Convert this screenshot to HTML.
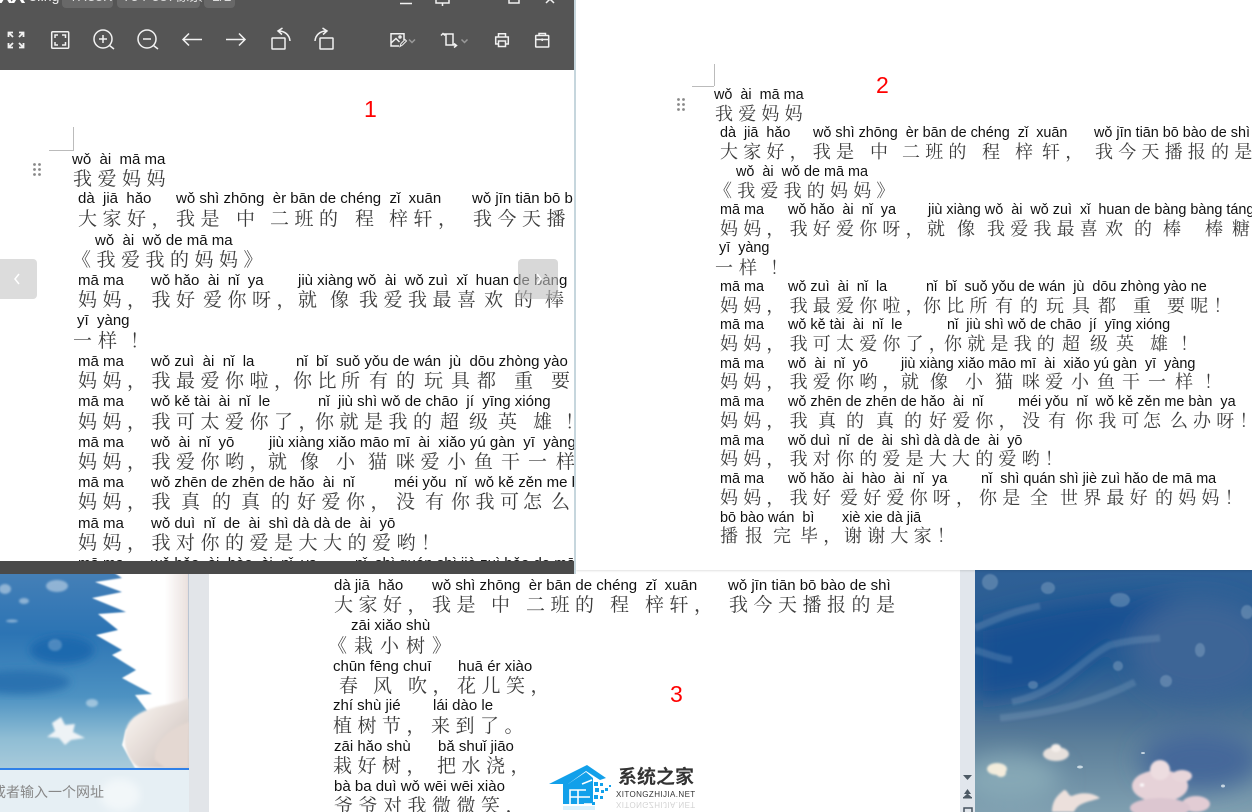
<!DOCTYPE html>
<html lang="zh">
<head>
<meta charset="utf-8">
<title>Screenshot</title>
<style>
html,body{margin:0;padding:0;background:#fff}
#root{position:relative;width:1252px;height:812px;overflow:hidden;background:#fff;font-family:"Liberation Sans","Noto Sans CJK SC",sans-serif}
.a{position:absolute}
i,b{position:absolute;font-style:normal;font-weight:normal;white-space:pre;line-height:20px}
i{font-family:"Liberation Sans",sans-serif;color:#111;margin-top:1px}
b{font-family:"Noto Serif CJK SC","Liberation Serif",serif;color:#3c3c3c}
.p1 i,.p3 i{font-size:15px}
.p1 b,.p3 b{font-size:19px;letter-spacing:5.5px}
.p2 i{font-size:14.4px}
.p2 b{font-size:18px;letter-spacing:5.2px}
.n{position:absolute;color:#f00;font-size:23px;line-height:26px;font-family:"Liberation Sans",sans-serif}
</style>
</head>
<body>
<div id="root">

<!-- panel 3 backgrounds -->
<svg class="a" style="left:0;top:560px" width="1252" height="252" viewBox="0 560 1252 252">
<defs>
<linearGradient id="lg" x1="0" y1="0" x2="0" y2="1"><stop offset="0" stop-color="#4a82b8"/><stop offset=".35" stop-color="#2c74b4"/><stop offset=".65" stop-color="#4d92c2"/><stop offset=".85" stop-color="#8fbdd4"/><stop offset="1" stop-color="#a9cbdb"/></linearGradient>
<linearGradient id="rg" x1="0" y1="0" x2="0" y2="1"><stop offset="0" stop-color="#2f6096"/><stop offset=".4" stop-color="#275c93"/><stop offset=".62" stop-color="#4a7095"/><stop offset=".72" stop-color="#5c7f9a"/><stop offset="1" stop-color="#7f9fb0"/></linearGradient>
<linearGradient id="fur" x1="0" y1="0" x2="1" y2="0"><stop offset="0" stop-color="#fff"/><stop offset=".75" stop-color="#fff"/><stop offset="1" stop-color="#e9dfdc"/></linearGradient>
<linearGradient id="paw" x1="0" y1="0" x2="1" y2="1"><stop offset="0" stop-color="#fffaf6"/><stop offset="1" stop-color="#c9bdb8"/></linearGradient>
<filter id="b05"><feGaussianBlur stdDeviation=".8"/></filter>
<filter id="b1"><feGaussianBlur stdDeviation="1"/></filter>
<filter id="b3"><feGaussianBlur stdDeviation="4"/></filter>
<filter id="b8"><feGaussianBlur stdDeviation="12"/></filter>
<clipPath id="cl"><rect x="0" y="560" width="189" height="208"/></clipPath>
<clipPath id="cr"><rect x="975" y="570" width="277" height="242"/></clipPath>
</defs>
<g clip-path="url(#cl)">
<rect x="0" y="560" width="189" height="210" fill="url(#lg)"/>
<g filter="url(#b3)">
<ellipse cx="62" cy="650" rx="32" ry="14" fill="#1f69ae"/>
<ellipse cx="20" cy="682" rx="50" ry="12" fill="#2a72b0"/>
</g>
<g fill="#fff" opacity=".42" filter="url(#b1)">
<ellipse cx="57" cy="586" rx="11" ry="6"/><ellipse cx="5" cy="589" rx="6" ry="5"/><ellipse cx="24" cy="601" rx="5" ry="3"/><ellipse cx="55" cy="645" rx="7" ry="6" opacity=".5"/><ellipse cx="92" cy="703" rx="6" ry="4"/><ellipse cx="12" cy="621" rx="6" ry="1.500"/>
</g>
<path d="M61 717l4 8 10-1-2 8 12 6-14 2-6 5-6-7-12-1 8-6-3-8z" fill="#eef3f6" filter="url(#b1)"/>
<path d="M189 574V768H135L122 745 126 730 148 712 135 695 152 694 122 678 136 670 112 655 122 650 96 635 118 630 98 614 126 612 92 598 122 592 95 582 122 578 110 570H189Z" fill="url(#fur)" filter="url(#b05)"/>
<path d="M125 745C122 722 135 712 160 706 172 704 185 700 189 698V768H140C132 764 127 755 125 745Z" fill="url(#paw)" filter="url(#b1)"/>
<path d="M155 760C153 745 165 730 189 722V768H165Z" fill="#e4d8d2" filter="url(#b1)"/>
</g>
<rect x="0" y="768" width="189" height="2" fill="#2f80e8"/>
<rect x="0" y="770" width="189" height="42" fill="#e6eff4"/>
<ellipse cx="120" cy="795" rx="20" ry="16" fill="#f2f7f9" filter="url(#b3)"/>
<rect x="189" y="560" width="20" height="252" fill="#e2e5e9"/>
<rect x="209" y="560" width="751" height="252" fill="#fff"/>
<rect x="960" y="560" width="16" height="252" fill="#e1e6ec"/>
<g clip-path="url(#cr)">
<rect x="975" y="565" width="277" height="247" fill="url(#rg)"/>
<g filter="url(#b8)">
<path d="M975 625C1040 610 1070 600 1180 595L1100 650 1050 690 975 702Z" fill="#125092"/>
<ellipse cx="1200" cy="650" rx="70" ry="50" fill="#3c6596"/>
<ellipse cx="1200" cy="760" rx="60" ry="30" fill="#44689a"/>
<ellipse cx="1010" cy="780" rx="50" ry="25" fill="#86a8b6"/>
</g>
<g fill="none" stroke="#9dbad0" stroke-width="7" opacity=".22" filter="url(#b1)">
<path d="M975 628C1000 618 1010 612 1040 606"/>
<path d="M1012 702C1060 692 1080 660 1110 645 1130 640 1140 640 1160 638"/>
<path d="M1000 718C1060 712 1100 700 1135 682"/>
<path d="M975 650C990 655 1005 660 1012 660"/>
</g>
<g fill="#8fadc9" opacity=".42" filter="url(#b05)">
<ellipse cx="990" cy="582" rx="8" ry="8"/><ellipse cx="1048" cy="588" rx="7" ry="6"/><ellipse cx="1120" cy="600" rx="10" ry="7"/><ellipse cx="1247" cy="612" rx="6" ry="7"/><ellipse cx="1118" cy="666" rx="5" ry="5"/><ellipse cx="1200" cy="650" rx="5" ry="7"/><ellipse cx="1166" cy="681" rx="6" ry="6"/><ellipse cx="1033" cy="685" rx="5" ry="4"/>
</g>
<g filter="url(#b1)">
<ellipse cx="1056" cy="754" rx="13" ry="7" fill="#e6e0dc"/><ellipse cx="1056" cy="748" rx="5" ry="4" fill="#f4eeea"/>
<ellipse cx="997" cy="769" rx="10" ry="6" fill="#f2ecdc"/><ellipse cx="1001" cy="773" rx="5" ry="4" fill="#f4ecdc"/>
<ellipse cx="1160" cy="786" rx="28" ry="16" fill="#e6d2d8"/><ellipse cx="1160" cy="770" rx="10" ry="10" fill="#eddde0"/><ellipse cx="1182" cy="776" rx="10" ry="6" fill="#e8d6da"/><ellipse cx="1196" cy="804" rx="14" ry="8" fill="#e2ccd4"/><ellipse cx="1160" cy="808" rx="30" ry="10" fill="#dcc6d0"/>
<path d="M1052 812C1052 800 1058 795 1064 790 1068 790 1068 796 1072 796 1080 792 1092 792 1100 798 1090 802 1078 802 1074 812Z" fill="#ece0dc"/>
<ellipse cx="1142" cy="785" rx="2" ry="1.500" fill="#fff"/>
</g>
<g fill="#e2ecf2" opacity=".8"><ellipse cx="1080" cy="767" rx="3" ry="1.500"/><ellipse cx="1223" cy="786" rx="2" ry="1.500"/><ellipse cx="1143" cy="753" rx="2" ry="1"/></g>
</g>
<g fill="#3e4b57" opacity=".9">
<path d="M963 775h9l-4.500 5z"/><rect x="963" y="797" width="9" height="1.500"/><path d="M964 794l3.500-5 3.500 5z"/><path d="M963 797.500l4.500-4 4.500 4z"/>
</g>
<rect x="964" y="808" width="8" height="8" fill="none" stroke="#46525e" stroke-width="1.500"/>
</svg>
<div class="a" style="left:-8px;top:782px;font-size:14px;line-height:20px;color:#888;white-space:nowrap">或者输入一个网址</div>

<!-- panel 3 -->
<div class="a p3" style="left:0;top:0;width:1252px;height:812px">
<i style="left:334px;top:575px">dà jiā  hǎo</i><i style="left:432px;top:575px">wǒ shì zhōng  èr bān de chéng  zǐ  xuān</i><i style="left:728px;top:575px">wǒ jīn tiān bō bào de shì</i>
<b style="left:334px;top:594px">大家好，我是</b><b style="left:491px;top:594px">中</b><b style="left:526px;top:594px">二班的</b><b style="left:610px;top:594px">程</b><b style="left:645px;top:594px">梓轩，</b><b style="left:729px;top:594px">我今天播报的是</b>
<i style="left:351px;top:615px">zāi xiǎo shù</i>
<b style="left:328px;top:635px;letter-spacing:7px">《栽小树》</b>
<i style="left:333px;top:656px">chūn fēng chuī</i><i style="left:458px;top:656px">huā ér xiào</i>
<b style="left:339px;top:675px">春</b><b style="left:373px;top:675px">风</b><b style="left:408px;top:675px">吹，花儿笑，</b>
<i style="left:333px;top:695px">zhí shù jié</i><i style="left:433px;top:695px">lái dào le</i>
<b style="left:333px;top:715px">植树节，来到了。</b>
<i style="left:334px;top:736px">zāi hǎo shù</i><i style="left:438px;top:736px">bǎ shuǐ jiāo</i>
<b style="left:333px;top:755px">栽好树，</b><b style="left:437px;top:755px">把水浇，</b>
<i style="left:334px;top:776px">bà ba duì wǒ wēi wēi xiào</i>
<b style="left:334px;top:795px">爷爷对我微微笑，</b>
</div>
<div class="n" style="left:670px;top:681px">3</div>

<!-- watermark -->
<svg class="a" style="left:545px;top:760px" width="70" height="52" viewBox="545 760 70 52">
<path d="M549 784L587 765 606 778 600 780 586 771 568 784Z" fill="#12a0ea"/>
<path d="M563 784H568L586 772 593 778V804H563Z" fill="#12a0ea"/>
<g stroke="#fff" stroke-width="1.600" fill="none"><path d="M570 805V790H586M570 797H590M578 790V805M582 784L592 780M584 804H594"/></g>
<g fill="#12a0ea"><rect x="594" y="782" width="4" height="4"/><rect x="600" y="783" width="3" height="3"/><rect x="605" y="788" width="3" height="3"/><rect x="609" y="785" width="2" height="2"/><rect x="595" y="788" width="4" height="4"/><rect x="601" y="790" width="3" height="3"/><rect x="594" y="795" width="4" height="4"/><rect x="600" y="796" width="3" height="3"/><rect x="592" y="802" width="3" height="3"/></g>
<rect x="563" y="806" width="32" height="4" fill="#12a0ea" opacity=".15"/>
</svg>
<div class="a" style="left:618px;top:764px;font-size:19px;line-height:24px;font-weight:bold;color:#333;white-space:nowrap;font-family:'Noto Sans CJK SC',sans-serif">系统之家</div>
<div class="a" style="left:616px;top:790px;font-size:8px;line-height:10px;letter-spacing:.4px;color:#333;white-space:nowrap">XITONGZHIJIA.NET</div>
<div class="a" style="left:616px;top:799px;font-size:8px;line-height:10px;letter-spacing:.4px;color:#333;opacity:.22;transform:scaleY(-1);white-space:nowrap">XITONGZHIJIA.NET</div>

<!-- panel 2 -->
<div class="a" style="left:576px;top:0;width:676px;height:570px;background:#fff;box-shadow:0 1px 2px rgba(0,0,0,.12)"></div>
<div class="a p2" style="left:0;top:0;width:1252px;height:570px;overflow:hidden">
<div class="a" style="left:714px;top:64px;width:1px;height:22px;background:#bbb"></div>
<div class="a" style="left:692px;top:86px;width:22px;height:1px;background:#bbb"></div>
<svg class="a" style="left:677px;top:98px" width="9" height="14"><g fill="#888"><circle cx="1.500" cy="1.500" r="1.400"/><circle cx="6.500" cy="1.500" r="1.400"/><circle cx="1.500" cy="6.500" r="1.400"/><circle cx="6.500" cy="6.500" r="1.400"/><circle cx="1.500" cy="11.500" r="1.400"/><circle cx="6.500" cy="11.500" r="1.400"/></g></svg>
<i style="left:714px;top:84px">wǒ  ài  mā ma</i>
<b style="left:715px;top:103px">我爱妈妈</b>
<i style="left:720px;top:122px">dà  jiā  hǎo</i><i style="left:813px;top:122px">wǒ shì zhōng  èr bān de chéng  zǐ  xuān</i><i style="left:1094px;top:122px">wǒ jīn tiān bō bào de shì</i>
<b style="left:720px;top:141px">大家好，我是</b><b style="left:870px;top:141px">中</b><b style="left:902px;top:141px">二班的</b><b style="left:982px;top:141px">程</b><b style="left:1015px;top:141px">梓</b><b style="left:1042px;top:141px">轩，</b><b style="left:1095px;top:141px">我今天播报的是</b>
<i style="left:736px;top:161px">wǒ  ài  wǒ de mā ma</i>
<b style="left:714px;top:180px">《我爱我的妈妈》</b>
<i style="left:720px;top:199px">mā ma</i><i style="left:788px;top:199px">wǒ hǎo  ài  nǐ  ya</i><i style="left:928px;top:199px">jiù xiàng wǒ  ài  wǒ zuì  xǐ  huan de bàng bàng táng</i>
<b style="left:720px;top:218px">妈妈，我好爱你呀，</b><b style="left:927px;top:218px">就</b><b style="left:957px;top:218px">像</b><b style="left:987px;top:218px">我爱我最喜</b><b style="left:1105px;top:218px">欢</b><b style="left:1134px;top:218px">的</b><b style="left:1163px;top:218px">棒</b><b style="left:1205px;top:218px">棒</b><b style="left:1232px;top:218px">糖</b>
<i style="left:719px;top:237px">yī  yàng</i>
<b style="left:715px;top:257px">一</b><b style="left:739px;top:257px">样</b><b style="left:770px;top:257px">！</b>
<i style="left:720px;top:276px">mā ma</i><i style="left:788px;top:276px">wǒ zuì  ài  nǐ  la</i><i style="left:926px;top:276px">nǐ  bǐ  suǒ yǒu de wán  jù  dōu zhòng yào ne</i>
<b style="left:720px;top:295px">妈妈，我最爱你啦，</b><b style="left:923px;top:295px">你比所</b><b style="left:995px;top:295px">有</b><b style="left:1020px;top:295px">的</b><b style="left:1046px;top:295px">玩</b><b style="left:1072px;top:295px">具</b><b style="left:1098px;top:295px">都</b><b style="left:1133px;top:295px">重</b><b style="left:1167px;top:295px">要呢！</b>
<i style="left:720px;top:314px">mā ma</i><i style="left:788px;top:314px">wǒ kě tài  ài  nǐ  le</i><i style="left:947px;top:314px">nǐ  jiù shì wǒ de chāo  jí  yīng xióng</i>
<b style="left:720px;top:333px">妈妈，我可太爱你了，</b><b style="left:944px;top:333px">你就是我的</b><b style="left:1062px;top:333px">超</b><b style="left:1090px;top:333px">级</b><b style="left:1116px;top:333px">英</b><b style="left:1150px;top:333px">雄</b><b style="left:1180px;top:333px">！</b>
<i style="left:720px;top:353px">mā ma</i><i style="left:788px;top:353px">wǒ  ài  nǐ  yō</i><i style="left:901px;top:353px">jiù xiàng xiǎo māo mī  ài  xiǎo yú gàn  yī  yàng</i>
<b style="left:720px;top:371px">妈妈，我爱你哟，</b><b style="left:901px;top:371px">就</b><b style="left:930px;top:371px">像</b><b style="left:965px;top:371px">小</b><b style="left:995px;top:371px">猫</b><b style="left:1022px;top:371px">咪爱</b><b style="left:1071px;top:371px">小</b><b style="left:1097px;top:371px">鱼</b><b style="left:1122px;top:371px">干</b><b style="left:1148px;top:371px">一</b><b style="left:1175px;top:371px">样</b><b style="left:1204px;top:371px">！</b>
<i style="left:720px;top:391px">mā ma</i><i style="left:788px;top:391px">wǒ zhēn de zhēn de hǎo  ài  nǐ</i><i style="left:1018px;top:391px">méi yǒu  nǐ  wǒ kě zěn me bàn  ya</i>
<b style="left:720px;top:410px">妈妈，我</b><b style="left:818px;top:410px">真</b><b style="left:846px;top:410px">的</b><b style="left:876px;top:410px">真</b><b style="left:904px;top:410px">的</b><b style="left:929px;top:410px">好爱你，</b><b style="left:1022px;top:410px">没</b><b style="left:1048px;top:410px">有</b><b style="left:1075px;top:410px">你我可</b><b style="left:1143px;top:410px">怎</b><b style="left:1170px;top:410px">么</b><b style="left:1193px;top:410px">办呀！</b>
<i style="left:720px;top:430px">mā ma</i><i style="left:788px;top:430px">wǒ duì  nǐ  de  ài  shì dà dà de  ài  yō</i>
<b style="left:720px;top:448px">妈妈，我对你的爱是大大的爱哟！</b>
<i style="left:720px;top:468px">mā ma</i><i style="left:788px;top:468px">wǒ hǎo  ài  hào  ài  nǐ  ya</i><i style="left:981px;top:468px">nǐ  shì quán shì jiè zuì hǎo de mā ma</i>
<b style="left:720px;top:487px">妈妈，我好</b><b style="left:840px;top:487px">爱好爱你呀，</b><b style="left:979px;top:487px">你是</b><b style="left:1030px;top:487px">全</b><b style="left:1060px;top:487px">世界最好</b><b style="left:1155px;top:487px">的妈妈！</b>
<i style="left:720px;top:507px">bō bào wán  bì</i><i style="left:842px;top:507px">xiè xie dà jiā</i>
<b style="left:720px;top:525px">播</b><b style="left:745px;top:525px">报</b><b style="left:773px;top:525px">完</b><b style="left:800px;top:525px">毕，</b><b style="left:844px;top:525px">谢谢大家！</b>
</div>
<div class="n" style="left:876px;top:72px">2</div>

<!-- panel 1 -->
<div class="a" style="left:574px;top:0;width:2px;height:574px;background:#c6d6dd"></div>
<div class="a p1" style="left:0;top:0;width:574px;height:574px;overflow:hidden;background:#fff">
<div class="a" style="left:73px;top:127px;width:1px;height:23px;background:#bbb"></div>
<div class="a" style="left:49px;top:150px;width:25px;height:1px;background:#bbb"></div>
<svg class="a" style="left:33px;top:163px" width="9" height="15"><g fill="#888"><circle cx="1.500" cy="1.500" r="1.400"/><circle cx="6.500" cy="1.500" r="1.400"/><circle cx="1.500" cy="6.500" r="1.400"/><circle cx="6.500" cy="6.500" r="1.400"/><circle cx="1.500" cy="11.500" r="1.400"/><circle cx="6.500" cy="11.500" r="1.400"/></g></svg>
<i style="left:72px;top:149px">wǒ  ài  mā ma</i>
<b style="left:73px;top:168px">我爱妈妈</b>
<i style="left:78px;top:188px">dà  jiā  hǎo</i><i style="left:176px;top:188px">wǒ shì zhōng  èr bān de chéng  zǐ  xuān</i><i style="left:472px;top:188px">wǒ jīn tiān bō b</i>
<b style="left:78px;top:208px">大家好，我是</b><b style="left:236px;top:208px">中</b><b style="left:270px;top:208px">二班的</b><b style="left:355px;top:208px">程</b><b style="left:389px;top:208px">梓轩，</b><b style="left:473px;top:208px">我今天播</b>
<i style="left:95px;top:230px">wǒ  ài  wǒ de mā ma</i>
<b style="left:72px;top:249px">《我爱我的妈妈》</b>
<i style="left:78px;top:270px">mā ma</i><i style="left:151px;top:270px">wǒ hǎo  ài  nǐ  ya</i><i style="left:298px;top:270px">jiù xiàng wǒ  ài  wǒ zuì  xǐ  huan de bàng</i>
<b style="left:78px;top:289px">妈妈，我好</b><b style="left:203px;top:289px">爱你呀，</b><b style="left:298px;top:289px">就</b><b style="left:330px;top:289px">像</b><b style="left:359px;top:289px">我爱我最喜</b><b style="left:484px;top:289px">欢</b><b style="left:514px;top:289px">的</b><b style="left:545px;top:289px">棒</b>
<i style="left:77px;top:310px">yī  yàng</i>
<b style="left:73px;top:330px">一</b><b style="left:98px;top:330px">样</b><b style="left:130px;top:330px">！</b>
<i style="left:78px;top:351px">mā ma</i><i style="left:151px;top:351px">wǒ zuì  ài  nǐ  la</i><i style="left:296px;top:351px">nǐ  bǐ  suǒ yǒu de wán  jù  dōu zhòng yào</i>
<b style="left:78px;top:370px">妈妈，我最爱你啦，</b><b style="left:293px;top:370px">你比</b><b style="left:341px;top:370px">所</b><b style="left:369px;top:370px">有</b><b style="left:396px;top:370px">的</b><b style="left:424px;top:370px">玩</b><b style="left:451px;top:370px">具</b><b style="left:477px;top:370px">都</b><b style="left:514px;top:370px">重</b><b style="left:551px;top:370px">要</b>
<i style="left:78px;top:391px">mā ma</i><i style="left:151px;top:391px">wǒ kě tài  ài  nǐ  le</i><i style="left:318px;top:391px">nǐ  jiù shì wǒ de chāo  jí  yīng xióng</i>
<b style="left:78px;top:411px">妈妈，我可太爱你了，</b><b style="left:315px;top:411px">你就是我的</b><b style="left:440px;top:411px">超</b><b style="left:469px;top:411px">级</b><b style="left:498px;top:411px">英</b><b style="left:533px;top:411px">雄</b><b style="left:565px;top:411px">！</b>
<i style="left:78px;top:432px">mā ma</i><i style="left:151px;top:432px">wǒ  ài  nǐ  yō</i><i style="left:269px;top:432px">jiù xiàng xiǎo māo mī  ài  xiǎo yú gàn  yī  yàng</i>
<b style="left:78px;top:451px">妈妈，我爱你哟，</b><b style="left:268px;top:451px">就</b><b style="left:300px;top:451px">像</b><b style="left:336px;top:451px">小</b><b style="left:368px;top:451px">猫</b><b style="left:396px;top:451px">咪爱</b><b style="left:447px;top:451px">小</b><b style="left:474px;top:451px">鱼</b><b style="left:501px;top:451px">干</b><b style="left:528px;top:451px">一</b><b style="left:556px;top:451px">样</b>
<i style="left:78px;top:472px">mā ma</i><i style="left:151px;top:472px">wǒ zhēn de zhēn de hǎo  ài  nǐ</i><i style="left:394px;top:472px">méi yǒu  nǐ  wǒ kě zěn me b</i>
<b style="left:78px;top:491px">妈妈，我</b><b style="left:181px;top:491px">真</b><b style="left:212px;top:491px">的</b><b style="left:241px;top:491px">真</b><b style="left:271px;top:491px">的</b><b style="left:297px;top:491px">好爱你，</b><b style="left:396px;top:491px">没</b><b style="left:425px;top:491px">有</b><b style="left:451px;top:491px">你我可</b><b style="left:523px;top:491px">怎</b><b style="left:551px;top:491px">么</b>
<i style="left:78px;top:513px">mā ma</i><i style="left:151px;top:513px">wǒ duì  nǐ  de  ài  shì dà dà de  ài  yō</i>
<b style="left:78px;top:532px">妈妈，我对你的爱是大大的爱哟！</b>
<i style="left:78px;top:553px">mā ma</i><i style="left:151px;top:553px">wǒ hǎo  ài  hào  ài  nǐ  ya</i><i style="left:355px;top:553px">nǐ  shì quán shì jiè zuì hǎo de mā ma</i>

<div class="a" style="left:0;top:561px;width:574px;height:13px;background:#4a4a4a"></div>

<!-- nav buttons -->
<div class="a" style="left:-4px;top:259px;width:41px;height:40px;border-radius:4px;background:#dcdcdc"></div>
<svg class="a" style="left:12px;top:272px" width="10" height="14"><path d="M7 2L3 7l4 5" fill="none" stroke="#fff" stroke-width="1.500"/></svg>
<div class="a" style="left:518px;top:259px;width:40px;height:40px;border-radius:4px;background:rgba(190,190,190,.6)"></div>
<svg class="a" style="left:534px;top:272px" width="10" height="14"><path d="M3 2l4 5-4 5" fill="none" stroke="#fff" stroke-width="1.500"/></svg>

<!-- toolbar -->
<div class="a" style="left:0;top:0;width:574px;height:70px;background:#555"></div>
<div class="a" style="left:-2px;top:-14px;font-size:22px;line-height:20px;font-weight:bold;color:#fff;letter-spacing:-2px">XX</div>
<div class="a" style="left:29px;top:-12px;font-size:14px;line-height:16px;color:#eee">8.ing</div>
<div class="a" style="left:62px;top:-6px;width:51px;height:14px;background:#686868;border-radius:4px"></div>
<div class="a" style="left:117px;top:-6px;width:83px;height:14px;background:#686868;border-radius:4px"></div>
<div class="a" style="left:204px;top:-6px;width:31px;height:14px;background:#686868;border-radius:4px"></div>
<div class="a" style="left:68px;top:-12px;font-size:14px;line-height:16px;color:#ddd;white-space:nowrap">47.35K</div>
<div class="a" style="left:123px;top:-12px;font-size:14px;line-height:16px;color:#ddd;white-space:nowrap">754*587像素</div>
<div class="a" style="left:212px;top:-12px;font-size:14px;line-height:16px;color:#ddd;white-space:nowrap">1/1</div>
<svg class="a" style="left:0;top:0" width="574" height="70" viewBox="0 0 574 70" fill="none" stroke="#f2f2f2" stroke-width="1.500">
<path d="M400 3.500H412"/><path d="M436 0V3H449V0M442.500 3V6"/><path d="M509 0V3H519V0"/><path d="M546 3L550 -1M554 3L550 -1"/>
<path d="M8.500 37V32.500H13M8.500 32.500L13 37M23.500 37V32.500H19M23.500 32.500L19 37M8.500 43V47.500H13M8.500 47.500L13 43M23.500 43V47.500H19M23.500 47.500L19 43" stroke-width="1.800"/>
<rect x="51.700" y="31.700" width="17" height="16.600" rx="1"/><path d="M55 38V35H58M62 35H65.500V38M65.500 42V45H62M58 45H55V42" stroke-width="1.500"/>
<circle cx="103" cy="39" r="9"/><path d="M109.500 45.500L114 49M99 39H107M103 35V43"/>
<circle cx="147" cy="39" r="9"/><path d="M153.500 45.500L158 49M143 39H151"/>
<path d="M202 39.500H183M189 33.500L183 39.500 189 45.500"/>
<path d="M226 39.500H245M239 33.500L245 39.500 239 45.500"/>
<rect x="272" y="38" width="13" height="11" rx=".5"/><path d="M290 41C289.500 35 285 31 278.500 31M282.500 28L278 31 282 34.500"/>
<rect x="320" y="38" width="13" height="11" rx=".5"/><path d="M315 41C315.500 35 320 31 326.500 31M322.500 28L327 31 323 34.500"/>
<path d="M399 46H391V33.700H404V40"/><path d="M391 43L396 38.500 399.500 42"/><circle cx="400" cy="37" r="1"/><path d="M400 46.500L401 43.500 405 39.500 406.500 41 402.500 45Z" stroke-width="1"/>
<path d="M409 39.500L412 42.500 415 39.500M461.500 39.500L464.500 42.500 467.500 39.500" stroke="#999"/>
<path d="M443 34H453V45M456 45H446V34M441 35.500L443 33.500 445 35.500M454 43.500L456.500 45.500 454 47.500" stroke-width="1.500"/>
<path d="M498.500 37V33.700H505.500V37M498.500 44H495.700V37H508.300V44H505.500"/><rect x="498.500" y="41" width="7" height="5.500"/>
<rect x="535.700" y="35.500" width="13" height="11.500" rx=".5"/><path d="M539 35.500V33.500H545.500V35.500M535.700 39.500H548.700M542.200 38.500V41"/>
</svg>
</div>
<div class="n" style="left:364px;top:96px">1</div>

</div>
</body>
</html>
